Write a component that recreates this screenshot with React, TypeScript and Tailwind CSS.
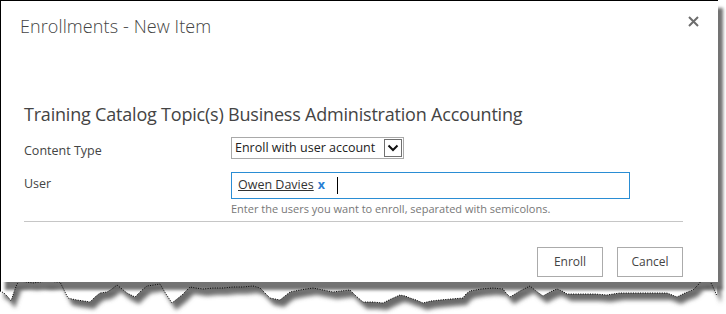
import React from "react";

const edge: [number, number][] = [
  [0, 291], [4, 293], [8, 297], [11, 301], [14, 292], [17, 284], [20, 281], [26, 282], [33, 283], [40, 282],
  [46, 281], [50, 281], [56, 282], [60, 282], [64, 290], [68, 298], [72, 299], [77, 300], [84, 301],
  [90, 302], [95, 297], [100, 293], [107, 292], [112, 289], [117, 285], [122, 289], [127, 293], [135, 297],
  [141, 291], [147, 286], [154, 285], [160, 284], [166, 294], [172, 303], [177, 299], [182, 295], [186, 291],
  [190, 287], [196, 288], [203, 289], [213, 288], [223, 288], [233, 287], [243, 287], [253, 286], [260, 288],
  [265, 293], [270, 298], [275, 299], [280, 300], [285, 296], [290, 292], [300, 290], [306, 289], [313, 288],
  [323, 290], [333, 292], [341, 291], [350, 290], [356, 296], [363, 302], [373, 302], [383, 303], [391, 299],
  [400, 295], [405, 296], [410, 298], [416, 300], [423, 303], [431, 301], [440, 300], [451, 299], [463, 298],
  [466, 294], [470, 291], [481, 289], [493, 288], [503, 289], [506, 293], [510, 297], [520, 291], [530, 286],
  [536, 291], [543, 296], [550, 292], [557, 289], [562, 291], [567, 294], [575, 294], [583, 294], [595, 294],
  [607, 295], [613, 294], [620, 293], [635, 293], [650, 293], [658, 293], [667, 293], [672, 295], [677, 297],
  [685, 293], [693, 290], [698, 285], [702, 280], [706, 281], [710, 281], [714, 289], [717, 296],
];

const edgePath = edge.map(([x, y], i) => `${i === 0 ? "M" : "L"}${x},${y}`).join(" ");
const paperPath = `M0,282 ${edgePath.replace(/^M/, "L")} L717,282 Z`;

function TornEdge() {
  return (
    <svg width="726" height="32" viewBox="0 282 726 32" className="block">
      <defs>
        <filter id="blur" x="-10%" y="-100%" width="120%" height="300%">
          <feGaussianBlur stdDeviation="2.2" />
        </filter>
      </defs>
      <path d={paperPath} transform="translate(4,7)" fill="#6b6b6b" filter="url(#blur)" />
      <path d={paperPath} fill="#fff" />
      <path d={edgePath} fill="none" stroke="#000" strokeWidth="1" strokeDasharray="1 1.4" />
      <line x1="0.5" y1="282" x2="0.5" y2="291" stroke="#000" strokeWidth="1" />
    </svg>
  );
}

export default function App() {
  const font = { fontFamily: '"Open Sans", "Noto Sans", sans-serif' };
  return (
    <div className="w-[726px] h-[314px] bg-white overflow-hidden flex flex-col" style={font}>
      <div className="relative w-[718px] h-[282px] shrink-0 border-l border-t border-black bg-white shadow-[5px_8px_3px_rgba(0,0,0,0.55)] flex flex-col">
        {/* Header */}
        <div className="flex items-start justify-between pl-[19px] pr-[19px] pt-[13px]">
          <h1 className="text-[18px] leading-[24px] font-light text-[#444] tracking-[0.1px]">Enrollments - New Item</h1>
          <button className="mt-[1px] w-[12px] h-[12px] flex items-center justify-center cursor-pointer">
            <svg width="11" height="11" viewBox="0 0 11 11">
              <path d="M1 1 L10 10 M10 1 L1 10" stroke="#6d6d6d" strokeWidth="2" />
            </svg>
          </button>
        </div>

        {/* Body */}
        <div className="pl-[23px] pr-[35px] pt-[64px] flex flex-col">
          <h2 className="text-[18px] leading-[24px] font-normal text-[#444] tracking-[-0.2px]">
            Training Catalog Topic(s) Business Administration Accounting
          </h2>

          <div className="grid grid-cols-[207px_1fr] mt-[11px] text-[12.5px] text-[#444]">
            <div className="pt-[4px] leading-[20px]">Content Type</div>
            <div>
              <div className="w-[173px] h-[22px] border border-[#a9a9a9] flex items-center justify-between">
                <span className="pl-[3px] text-[#222] text-[12.5px] leading-none">Enroll with user account</span>
                <span className="w-[18px] h-[18px] mr-[1px] border border-[#707070] bg-white flex items-center justify-center">
                  <svg width="12" height="8" viewBox="0 0 12 8">
                    <path d="M1.5 1.5 L6 6 L10.5 1.5" fill="none" stroke="#111" strokeWidth="2" />
                  </svg>
                </span>
              </div>
            </div>

            <div className="pt-[2px] leading-[20px] mt-[11px]">User</div>
            <div className="mt-[11px]">
              <div className="w-[399px] h-[27px] border border-[#2a8dd4] flex items-center pl-[6px]">
                <span className="underline text-[#333] text-[12.5px]">Owen Davies</span>
                <span className="ml-[4px] text-[#2a7fd4] font-bold text-[12.5px] leading-none">x</span>
                <span className="ml-[12px] w-px h-[17px] bg-black" />
              </div>
              <div className="text-[11px] text-[#777] mt-[3px] leading-[14px]">
                Enter the users you want to enroll, separated with semicolons.
              </div>
            </div>
          </div>

          <div className="h-px bg-[#c6c6c6] mt-[5px]" />

          <div className="flex justify-end gap-[14px] mt-[25px]">
            <button className="w-[66px] h-[30px] border border-[#ababab] bg-white text-[12px] text-[#444] cursor-pointer">Enroll</button>
            <button className="w-[66px] h-[30px] border border-[#ababab] bg-white text-[12px] text-[#444] cursor-pointer">Cancel</button>
          </div>
        </div>
      </div>
      <TornEdge />
    </div>
  );
}
